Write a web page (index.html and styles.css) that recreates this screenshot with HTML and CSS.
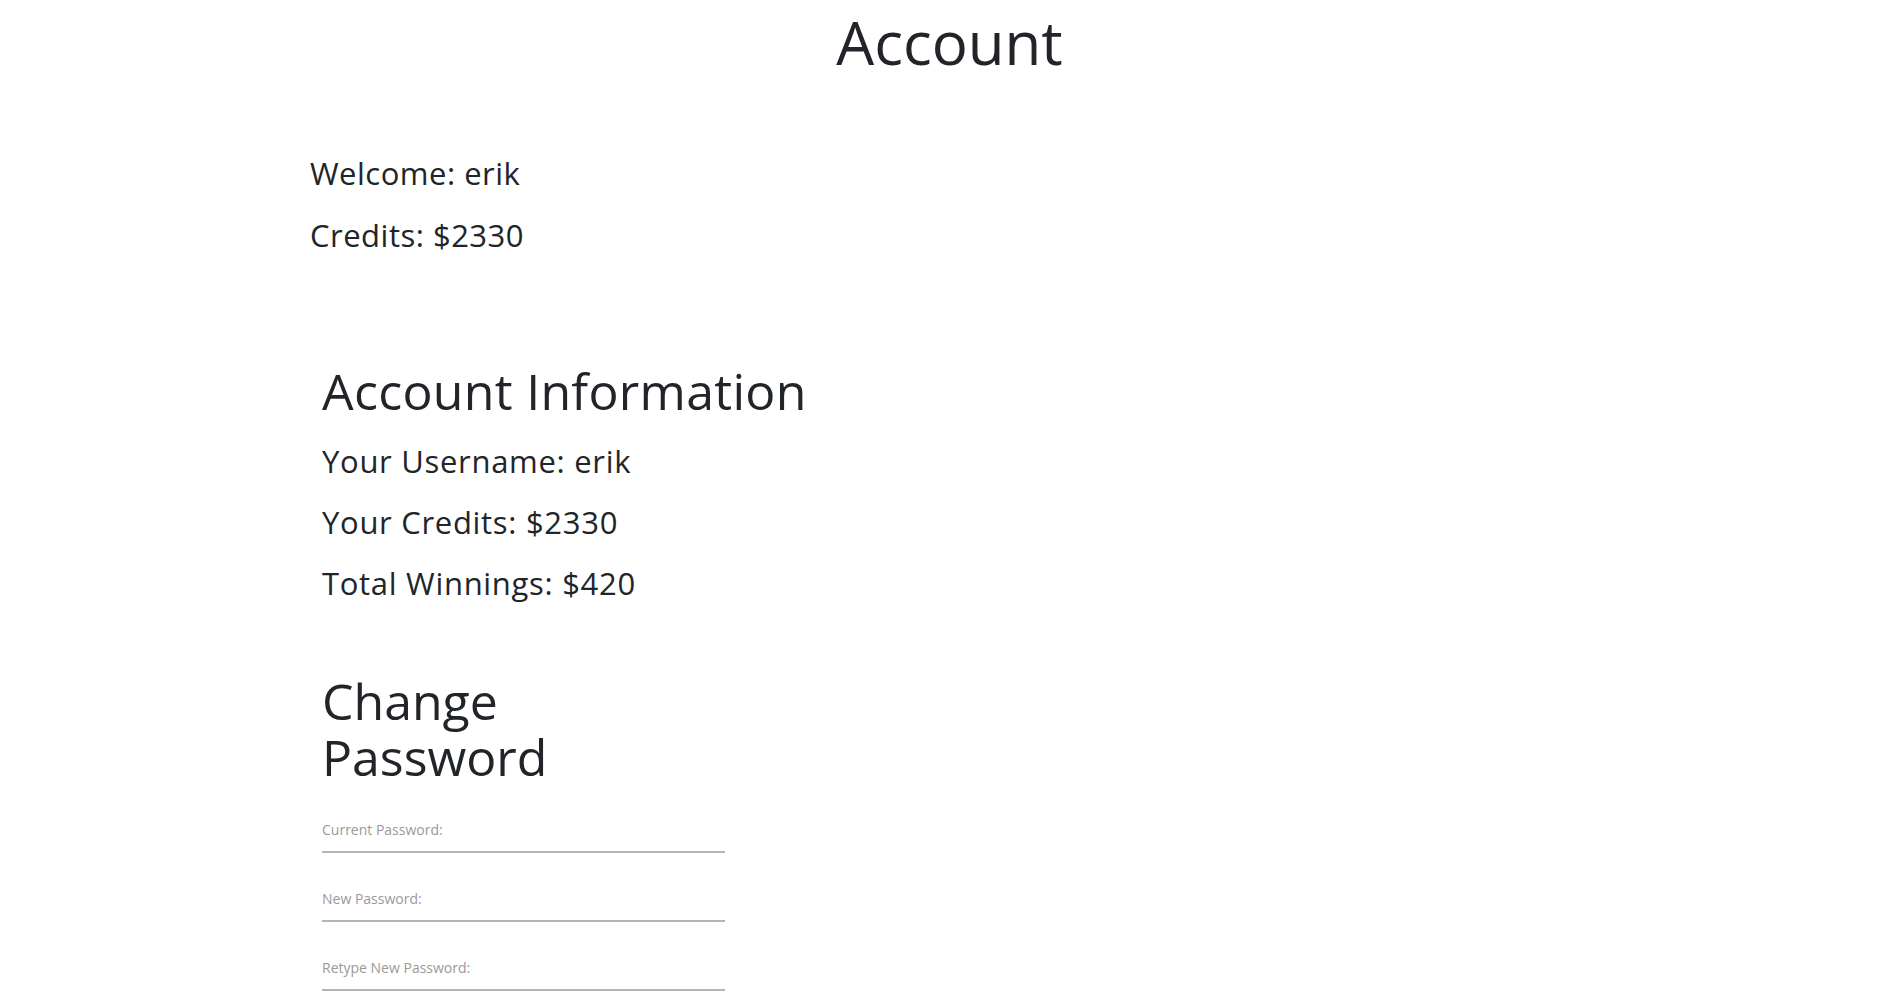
FILE: index.html
```html
<!DOCTYPE html>
<html lang="en">
<head>
<meta charset="utf-8">
<title>Account</title>
<link rel="stylesheet" href="styles.css">
</head>
<body>
<h1 class="title">Account</h1>
<main class="page">
  <div class="welcome">
    <p class="line">Welcome: erik</p>
    <p class="line">Credits: $2330</p>
  </div>
  <section class="info">
    <h2 class="heading">Account Information</h2>
    <p class="info-line">Your Username: erik</p>
    <p class="info-line">Your Credits: $2330</p>
    <p class="info-line">Total Winnings: $420</p>
  </section>
  <section class="password">
    <h2 class="heading heading-pw">Change Password</h2>
    <form class="pw-form">
      <input class="field" type="password" placeholder="Current Password:">
      <input class="field" type="password" placeholder="New Password:">
      <input class="field" type="password" placeholder="Retype New Password:">
    </form>
  </section>
</main>
</body>
</html>
```
FILE: styles.css
```css
html, body {
  margin: 0;
  padding: 0;
  background: #ffffff;
}
body {
  font-family: "Open Sans", "Noto Sans", sans-serif;
  color: #212529;
}
.title {
  margin: 0;
  padding-top: 6px;
  font-size: 60px;
  line-height: 72px;
  font-weight: 400;
  text-align: center;
}
.page {
  padding-left: 310px;
}
.welcome {
  margin-top: 64px;
}
.line {
  margin: 0;
  font-size: 31px;
  letter-spacing: 0.5px;
  line-height: 62px;
}
.info {
  margin-top: 94px;
  padding-left: 12px;
}
.heading {
  margin: 0;
  font-size: 50px;
  letter-spacing: 0.3px;
  line-height: 62px;
  font-weight: 400;
}
.info-line {
  margin: 0;
  font-size: 31px;
  letter-spacing: 0.7px;
  line-height: 61px;
}
.info-line:first-of-type {
  margin-top: 9px;
}
.password {
  margin-top: 59px;
  padding-left: 12px;
  width: 403px;
}
.heading-pw {
  line-height: 56px;
  letter-spacing: 0;
}
.pw-form {
  margin-top: 25px;
  display: flex;
  flex-direction: column;
  gap: 26px;
}
.field {
  display: block;
  width: 403px;
  box-sizing: border-box;
  margin: 0;
  padding: 10px 0 11px 0;
  font-family: "Open Sans", "Noto Sans", sans-serif;
  font-size: 14px;
  line-height: 20px;
  border: none;
  border-bottom: 2px solid #b4b4b4;
  outline: none;
  background: transparent;
}
.field::placeholder {
  color: #9a9a9a;
}
```
